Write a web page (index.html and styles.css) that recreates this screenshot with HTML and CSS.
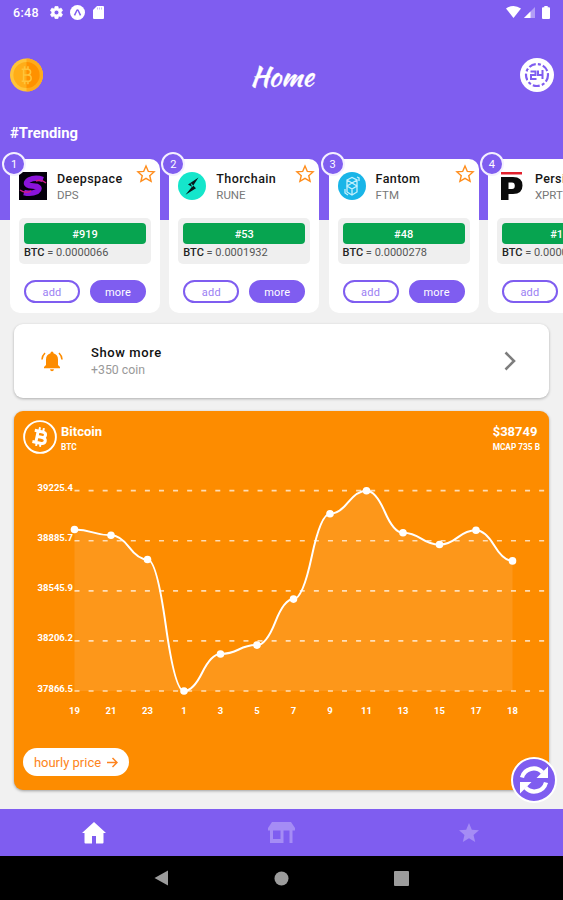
FILE: index.html
```html
<!DOCTYPE html>
<html lang="en">
<head>
    <meta charset="utf-8">
    <title>Home</title>
    <link rel="stylesheet" href="styles.css">
</head>
<body>
    <svg class="defs" width="0" height="0">
        <symbol id="star-outline" viewBox="0 0 24 24">
            <path d="M12 2.5l2.8 6.4 6.9.6-5.200 4.600 1.600 6.800-6.100-3.600-6.100 3.600 1.600-6.800L2.300 9.500l6.900-.6z" fill="none" stroke="#ff8d1c" stroke-width="1.700"/>
        </symbol>
    </svg>
    <div class="screen">
        <div class="status-bar">
            <span class="clock">6:48</span>
            <svg class="status-gear" width="13" height="13" viewBox="2 2 20 20"><path fill="#fff" stroke="#fff" d="M19.140 12.940c.04-.3.060-.61.060-.94s-.02-.64-.07-.94l2.030-1.580c.18-.14.230-.41.120-.61l-1.920-3.320c-.12-.22-.37-.29-.59-.22l-2.390.96c-.5-.38-1.030-.7-1.620-.94L14.400 2.810c-.04-.24-.24-.41-.48-.41h-3.840c-.24 0-.43.17-.47.41L9.250 5.350c-.59.24-1.130.57-1.620.94l-2.390-.96c-.22-.08-.47 0-.59.22L2.740 8.870c-.12.21-.08.47.12.61l2.030 1.580c-.05.3-.09.630-.09.940s.02.640.07.940l-2.030 1.580c-.18.140-.23.410-.12.610l1.920 3.320c.12.220.370.290.590.220l2.390-.96c.5.380 1.030.7 1.620.940l.36 2.540c.05.240.240.410.480.410h3.840c.24 0 .440-.17.470-.41l.36-2.540c.59-.24 1.130-.56 1.620-.94l2.390.96c.22.080.470 0 .590-.22l1.920-3.320c.12-.22.070-.47-.12-.61zM12 15.600a3.600 3.600 0 1 1 0-7.200 3.600 3.600 0 0 1 0 7.200z"/></svg>
            <svg class="status-expo" width="15" height="15" viewBox="0 0 15 15"><circle cx="7.500" cy="7.500" r="7.500" fill="#fff"/><path d="M4.500 10.400L6.800 5.500q.7-1.100 1.400 0L10.500 10.400" fill="none" stroke="#7f5df0" stroke-width="1.500"/></svg>
            <svg class="status-sd" width="11" height="13" viewBox="0 0 11 13"><path fill="#fff" d="M4 0h6q1 0 1 1v11q0 1-1 1H1q-1 0-1-1V4z"/><path stroke="#7f5df0" stroke-width=".7" opacity=".6" d="M4.500 1.500v2M6.500 1.500v2M8.500 1.500v2"/></svg>
            <span class="spacer"></span>
            <svg width="15" height="12" viewBox="0 0 15 12"><path fill="#fff" d="M0 2.500Q7.500-2.500 15 2.500L7.500 12z"/></svg>
            <svg class="status-signal" width="11" height="11" viewBox="0 0 11 11"><path fill="#fff" opacity=".4" d="M11 0v11H0z"/><path fill="#fff" d="M6.500 4.500V11H0z"/></svg>
            <svg class="status-battery" width="8" height="13" viewBox="0 0 8 13"><path fill="#fff" d="M2.300 0h3.400v1.300H7q1 0 1 1V12q0 1-1 1H1q-1 0-1-1V2.300q0-1 1-1h1.300z"/></svg>
        </div>

        <div class="header">
            <svg width="33" height="34" viewBox="0 0 34 34">
                <circle cx="17" cy="17" r="17" fill="#ffc43a"/>
                <path fill="#ffab1c" d="M17 0a17 17 0 0 1 0 34z"/>
                <circle cx="17" cy="17" r="13.500" fill="#ffad18"/>
                <path fill="#ff9100" d="M17 3.500a13.500 13.500 0 0 1 0 27z"/>
                <path fill="none" stroke="#ffc43a" stroke-width="1.600" d="M12 11h6q3.200 0 3.200 3 0 3-3.200 3h-3.500M18 17q3.800 0 3.800 3.300t-3.800 3.200h-6M14 11V23.500M15 8v3M18.500 8v3M15 23.500v3M18.500 23.500v3"/>
            </svg>
            <h1 class="title">Home</h1>
            <svg width="34" height="34" viewBox="0 0 34 34">
                <circle cx="17" cy="17" r="17" fill="#fff"/>
                <circle cx="17" cy="17" r="11" fill="none" stroke="#7f5df0" stroke-width="2.200" stroke-dasharray="7 2.200 3 2.200"/>
                <path fill="#fff" d="M8 12h17v10H8z"/>
                <path fill="none" stroke="#7f5df0" stroke-width="2" d="M10.500 13.500h5v3.500h-4.500v4h5.500M18 12.500V17h5M22.500 12v9"/>
            </svg>
        </div>

        <h2 class="section-title">#Trending</h2>

        <div class="cards">
            <div class="card">
                <span class="badge">1</span>
                <div class="coin">
                    <svg class="coin-logo" viewBox="0 0 28 28">
                        <rect width="28" height="28" fill="#05000c"/>
                        <path fill="none" stroke="#8c13dc" stroke-width="5.500" d="M24 7.500Q16 5 10 8q-5 3.500 0 5.500l8 1q4 2 0 5-6 3-13 1"/>
                        <path fill="none" stroke="#d01b89" stroke-width="1.500" d="M1 18q5 4 11 1M17 9q5-2 10 2"/>
                    </svg>
                    <div class="coin-text"><b>Deepspace</b><span>DPS</span></div>
                    <svg class="star"><use href="#star-outline"/></svg>
                </div>
                <div class="stats">
                    <div class="rank">#919</div>
                    <div class="price"><b>BTC</b> = 0.0000066</div>
                </div>
                <div class="actions"><button class="btn">add</button><button class="btn filled">more</button></div>
            </div>

            <div class="card">
                <span class="badge">2</span>
                <div class="coin">
                    <svg class="coin-logo" viewBox="0 0 28 28">
                        <circle cx="14" cy="14" r="14" fill="#15e6cb"/>
                        <path fill="#07191b" d="M20.500 5.500L10 12.500l4.300 2.500zM12.500 10.800l5.500 5.500-10.500 6.500 6.500-8z"/>
                    </svg>
                    <div class="coin-text"><b>Thorchain</b><span>RUNE</span></div>
                    <svg class="star"><use href="#star-outline"/></svg>
                </div>
                <div class="stats">
                    <div class="rank">#53</div>
                    <div class="price"><b>BTC</b> = 0.0001932</div>
                </div>
                <div class="actions"><button class="btn">add</button><button class="btn filled">more</button></div>
            </div>

            <div class="card">
                <span class="badge">3</span>
                <div class="coin">
                    <svg class="coin-logo" viewBox="0 0 28 28">
                        <circle cx="14" cy="14" r="14" fill="#19b5e8"/>
                        <path fill="none" stroke="#c4f0fc" stroke-width="1.300" d="M9 8l5-2.500L19 8v12l-5 3-5-3zM9 8l5 3 5-3M9 14l5-3 5 3-5 3zM9 15v5M14 17v6M7 17v4l3 2M21 9V6l-2-1"/>
                    </svg>
                    <div class="coin-text"><b>Fantom</b><span>FTM</span></div>
                    <svg class="star"><use href="#star-outline"/></svg>
                </div>
                <div class="stats">
                    <div class="rank">#48</div>
                    <div class="price"><b>BTC</b> = 0.0000278</div>
                </div>
                <div class="actions"><button class="btn">add</button><button class="btn filled">more</button></div>
            </div>

            <div class="card">
                <span class="badge">4</span>
                <div class="coin">
                    <svg class="coin-logo" viewBox="0 0 28 28">
                        <path fill="#e2202c" d="M4 0h21v2.500H4z"/>
                        <path fill="#0b0b0b" fill-rule="evenodd" d="M4 5h12q9.500 0 9.500 8.500T16 22h-4.500v6H4zM11.500 10.500v6.500h3.500q2.800 0 2.800-3.200t-2.800-3.300z"/>
                    </svg>
                    <div class="coin-text"><b>Persistence</b><span>XPRT</span></div>
                    <svg class="star"><use href="#star-outline"/></svg>
                </div>
                <div class="stats">
                    <div class="rank">#153</div>
                    <div class="price"><b>BTC</b> = 0.0000650</div>
                </div>
                <div class="actions"><button class="btn">add</button><button class="btn filled">more</button></div>
            </div>
        </div>

        <div class="show-more">
            <svg width="22" height="21" viewBox="0 0 22 21">
                <path fill="#fd8c00" d="M11 .5q1.500 0 1.500 1.700 4.500 1.300 4.500 6.300v5.500l2 2v1.200H3V16l2-2V8.500q0-5 4.500-6.300Q9.500.5 11 .5zM9 18.200h4q-.3 2-2 2t-2-2z"/>
                <path fill="none" stroke="#fd8c00" stroke-width="1.600" d="M4 2Q1.300 4.500 1 8.500M18 2q2.700 2.500 3 6.500"/>
            </svg>
            <div class="show-more-text"><b>Show more</b><span>+350 coin</span></div>
            <svg width="12" height="20" viewBox="0 0 12 20"><path d="M1.500 1.500L10 10l-8.500 8.500" fill="none" stroke="#7d7d7d" stroke-width="2.600"/></svg>
        </div>

        <div class="chart-card">
            <div class="chart-head">
                <svg width="34" height="34" viewBox="0 0 34 34">
                    <circle cx="17" cy="17" r="15.900" fill="none" stroke="#fff" stroke-width="1.900"/>
                    <g transform="rotate(12 17 17)" fill="none" stroke="#fff">
                        <path stroke-width="3" d="M10.500 11.500h8q3.500 0 3.500 2.700t-3.500 2.800h-4M18.500 17q4.500 0 4.500 3t-4.500 3h-8M14 11.500V23"/>
                        <path stroke-width="2" d="M15 7.500V11M19 7.500V11M15 23v3.500M19 23v3.500"/>
                    </g>
                </svg>
                <div class="chart-name"><b>Bitcoin</b><span>BTC</span></div>
                <div class="chart-price"><b>$38749</b><span>MCAP 735 B</span></div>
            </div>
            <svg class="chart" id="chart" width="535" height="270" viewBox="14 460 535 270"></svg>
            <button class="hourly">hourly price
                <svg width="11" height="11" viewBox="0 0 11 11"><path d="M0 5.500h10M5.500 1L10 5.500 5.500 10" fill="none" stroke="#fd8420" stroke-width="1.500"/></svg>
            </button>
        </div>

        <button class="refresh">
            <svg width="30" height="30" viewBox="0 0 30 30" fill="none" stroke="#fff" stroke-width="4.200">
                <path d="M3 12.500a12 12 0 0 1 20.500-5"/>
                <path d="M27 17.500a12 12 0 0 1-20.500 5"/>
                <path fill="#fff" stroke="none" d="M29 1.500V13H17.500zM1 28.500V17h11.500z"/>
            </svg>
        </button>

        <div class="tab-bar">
            <svg width="24" height="22" viewBox="0 0 24 22"><path fill="#fff" d="M12 0l12 11h-2.500v9.500q0 1-1 1H14V14h-4v7.500H3.500q-1 0-1-1V11H0z"/></svg>
            <svg width="27" height="21" viewBox="0 0 27 21"><path fill="#a58cf5" fill-rule="evenodd" d="M4 0h19l4 6v2.500H0V6zM2 8.500h13.500V21H2zM5 8.500V17h7.500V8.500zM21.500 8.500h3V21h-3z"/></svg>
            <svg width="20" height="19" viewBox="2 2 20 19"><path fill="#a58cf5" d="M12 17.270L18.180 21l-1.640-7.030L22 9.240l-7.190-.61L12 2 9.190 8.630 2 9.240l5.460 4.730L5.820 21z"/></svg>
        </div>

        <div class="android-nav">
            <svg width="15" height="16" viewBox="0 0 15 16"><path fill="#9c9c9c" d="M14 .5v15L.5 8z"/></svg>
            <svg width="15" height="15" viewBox="0 0 15 15"><circle cx="7.500" cy="7.500" r="7" fill="#9c9c9c"/></svg>
            <svg width="15" height="15" viewBox="0 0 15 15"><rect width="15" height="15" rx="1" fill="#9c9c9c"/></svg>
        </div>
    </div>
    <script src="chart.js"></script>
</body>
</html>
```

FILE: styles.css
```css
body {
    margin: 0;
    font-family: Roboto, sans-serif;
    background-color: #f1f1f1;
    overflow: hidden;
}
svg {
    display: block;
    flex-shrink: 0;
}
.defs {
    position: absolute;
}
button {
    font-family: inherit;
    padding: 0;
    cursor: pointer;
}
.screen {
    position: relative;
    display: flex;
    flex-direction: column;
    width: 563px;
    height: 900px;
    overflow: hidden;
    background: linear-gradient(#7f5df0 220px, #f1f1f1 220px);
}
.status-bar {
    display: flex;
    align-items: center;
    height: 24px;
    padding: 0 13px;
    color: white;
}
.clock {
    width: 26px;
    margin-right: 11px;
    font-size: 12.5px;
    font-weight: 500;
    letter-spacing: 0.3px;
}
.status-expo {
    margin: 0 8px 0 7px;
}
.spacer {
    flex: 1;
}
.status-signal {
    margin: 1px 7px 0 3px;
}
.header {
    display: flex;
    align-items: center;
    justify-content: space-between;
    height: 34px;
    margin-top: 34px;
    padding: 0 9px 0 10px;
}
.title {
    margin: 2px 0 0 1px;
    color: white;
    font-family: "Kaushan Script", Lato, sans-serif;
    font-size: 28px;
    font-weight: 400;
    -webkit-text-stroke: 0.3px white;
}
.section-title {
    margin: 32px 0 0 10px;
    color: white;
    font-size: 14.800px;
    line-height: 18px;
    font-weight: 700;
}
.cards {
    display: flex;
    gap: 9.300px;
    margin: 17px 0 0 10px;
}
.card {
    position: relative;
    flex: 0 0 150px;
    box-sizing: border-box;
    height: 154px;
    padding: 13px 9px 0;
    background-color: white;
    border-radius: 10px;
}
.badge {
    position: absolute;
    top: -7px;
    left: -8px;
    width: 20px;
    height: 20px;
    border: 2px solid #f4f0ff;
    border-radius: 50%;
    background-color: #7f5df0;
    color: white;
    font-size: 11px;
    line-height: 21px;
    text-align: center;
}
.coin {
    display: flex;
    height: 28px;
}
.coin-logo {
    width: 28px;
    height: 28px;
}
.coin-text {
    display: flex;
    flex-direction: column;
    flex: 1;
    min-width: 0;
    margin-left: 10px;
}
.coin-text b {
    color: #161616;
    font-size: 12.5px;
    font-weight: 500;
    line-height: 14px;
    letter-spacing: 0.4px;
}
.coin-text span {
    margin-top: 2px;
    color: #777;
    font-size: 11.5px;
    line-height: 15px;
}
.star {
    width: 20px;
    height: 20px;
    margin: -8px -5px 0 0;
}
.stats {
    box-sizing: border-box;
    height: 46px;
    margin-top: 18px;
    padding: 5px;
    background-color: #efefef;
    border-radius: 5px;
}
.rank {
    height: 21px;
    background-color: #07a450;
    border-radius: 4px;
    color: white;
    font-size: 11px;
    font-weight: 500;
    line-height: 23px;
    text-align: center;
}
.price {
    color: #555;
    font-size: 11px;
    line-height: 18px;
    white-space: nowrap;
}
.price b {
    color: #222;
    font-weight: 500;
}
.actions {
    display: flex;
    gap: 10px;
    margin: 16px 5px 0;
}
.btn {
    flex: 1;
    height: 23px;
    border: 2px solid #7f5df0;
    border-radius: 12px;
    background-color: white;
    color: #9b80f3;
    font-size: 11px;
    line-height: 21px;
    letter-spacing: 0.2px;
}
.btn.filled {
    background-color: #7f5df0;
    color: white;
}
.show-more {
    display: flex;
    align-items: center;
    box-sizing: border-box;
    height: 74px;
    margin: 11px 14px 0;
    padding: 0 33px 0 27px;
    background-color: white;
    border-radius: 9px;
    box-shadow: 0 1px 3px rgba(0,0,0,0.28);
}
.show-more-text {
    display: flex;
    flex-direction: column;
    flex: 1;
    margin-left: 28px;
}
.show-more-text b {
    color: #111;
    font-size: 13px;
    font-weight: 500;
    line-height: 17px;
    letter-spacing: 0.6px;
}
.show-more-text span {
    margin-top: 1px;
    color: #999;
    font-size: 12.300px;
    line-height: 17px;
}
.chart-card {
    display: flex;
    flex-direction: column;
    box-sizing: border-box;
    height: 379px;
    margin: 13px 14px 0;
    background-color: #fd8c00;
    border-radius: 9px;
    box-shadow: 0 1px 3px rgba(0,0,0,0.35);
    color: white;
}
.chart-head {
    display: flex;
    height: 40px;
    padding: 9px 9px 0;
}
.chart-name,
.chart-price {
    display: flex;
    flex-direction: column;
    padding-top: 4px;
}
.chart-name {
    margin-left: 4px;
}
.chart-price {
    margin-left: auto;
}
.chart-head b {
    font-size: 13px;
    font-weight: 700;
    line-height: 16px;
}
.chart-head span {
    font-size: 8.300px;
    font-weight: 700;
    line-height: 14px;
}
.grid {
    stroke: white;
    stroke-width: 1.700;
    stroke-dasharray: 5 9.080;
    opacity: 0.7;
}
.area {
    fill: white;
    opacity: 0.1;
}
.line {
    fill: none;
    stroke: white;
    stroke-width: 2;
}
.dot {
    fill: white;
}
.label {
    fill: white;
    font-size: 9.5px;
    font-weight: 700;
}
.label-y {
    text-anchor: end;
}
.label-x {
    text-anchor: middle;
}
.hourly {
    display: flex;
    align-items: center;
    justify-content: center;
    gap: 6px;
    width: 106px;
    height: 28px;
    margin: 18px 0 0 9px;
    border: none;
    border-radius: 14px;
    background-color: white;
    color: #fd8420;
    font-size: 13px;
}
.refresh {
    position: absolute;
    left: 511px;
    top: 757px;
    display: flex;
    align-items: center;
    justify-content: center;
    width: 46px;
    height: 46px;
    border: 2px solid white;
    border-radius: 50%;
    background-color: #7f5df0;
}
.tab-bar {
    display: grid;
    grid-template-columns: repeat(3, 1fr);
    align-items: center;
    justify-items: center;
    height: 47px;
    margin-top: auto;
    background-color: #7f5df0;
}
.android-nav {
    display: flex;
    align-items: center;
    justify-content: center;
    gap: 105px;
    height: 44px;
    background-color: black;
}
```

FILE: chart.js
```js
const svg = document.getElementById('chart');
const hours = [19, 21, 23, 1, 3, 5, 7, 9, 11, 13, 15, 17, 18];
const prices = [38962, 38923, 38759, 37866.5, 38118, 38178, 38490, 39069, 39225.4, 38940, 38860, 38957, 38749];
const ticks = [39225.4, 38885.7, 38545.9, 38206.2, 37866.5];

const left = 74.5, step = 36.5, top_ = 490.7, bottom = 691;
const max = ticks[0], min = ticks[4];

const px = i => left + i * step;
const py = value => bottom - (value - min) / (max - min) * (bottom - top_);

function add(name, attrs, text) {
    const el = document.createElementNS('http://www.w3.org/2000/svg', name);
    for (const key in attrs) el.setAttribute(key, attrs[key]);
    if (text !== undefined) el.textContent = text;
    svg.appendChild(el);
}

// two quadratic curves between each pair of points
let d = `M${px(0)},${py(prices[0])}`;
for (let i = 0; i < prices.length - 1; i++) {
    const x1 = px(i), x2 = px(i + 1), y1 = py(prices[i]), y2 = py(prices[i + 1]);
    const mx = (x1 + x2) / 2, my = (y1 + y2) / 2;
    d += ` Q${(mx + x1) / 2},${y1} ${mx},${my} Q${(mx + x2) / 2},${y2} ${x2},${y2}`;
}

ticks.forEach(t => {
    add('line', { class: 'grid', x1: left, x2: 545, y1: py(t), y2: py(t) });
    add('text', { class: 'label label-y', x: 73, y: py(t) + 0.5 }, t);
});
add('path', { class: 'area', d: `${d} V${bottom} H${left} Z` });
add('path', { class: 'line', d: d });
prices.forEach((p, i) => {
    add('circle', { class: 'dot', cx: px(i), cy: py(p), r: 3.8 });
    add('text', { class: 'label label-x', x: px(i), y: 714 }, hours[i]);
});
```
